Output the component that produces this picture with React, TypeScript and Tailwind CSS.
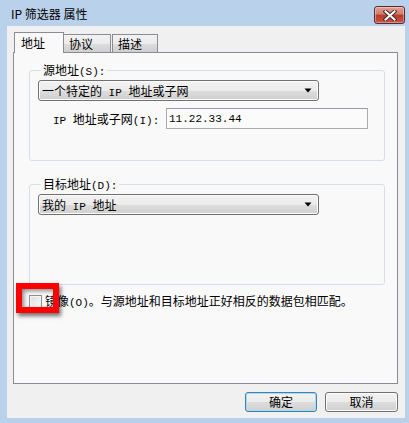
import React from "react";

const SANS = "font-['Noto_Sans_CJK_SC',sans-serif]";

// SimSun-like mix: CJK glyphs 12px wide, latin glyphs roughly half width
function T({ children }: { children: string }) {
  const runs = children.match(/[\x20-\x7e]+|[^\x20-\x7e]+/g) ?? [];
  return (
    <span className="inline-flex h-[14px] items-baseline whitespace-pre align-top">
      {runs.map((r, i) =>
        /^[\x20-\x7e]/.test(r) ? (
          <span key={i} className="font-['Liberation_Mono',monospace] text-[11px] leading-[14px]">
            {r}
          </span>
        ) : (
          <span key={i} className={`${SANS} text-[12px] leading-[14px]`}>
            {r}
          </span>
        )
      )}
    </span>
  );
}

function Arrow() {
  return (
    <svg width="8" height="5" viewBox="0 0 8 5">
      <path d="M0.5 0.5 H7.5 L4 4.5 Z" fill="#000" />
    </svg>
  );
}

function Combo({ label }: { label: string }) {
  return (
    <div className="flex h-[21px] w-[281px] items-center justify-between rounded-[3px] border border-[#707070] bg-[linear-gradient(#f2f2f2_0%,#ebebeb_50%,#dddddd_51%,#cfcfcf_100%)] pl-[3px] pr-[6px] shadow-[inset_0_0_0_1px_#fcfcfc]">
      <span className="text-[12px] leading-[14px] text-black">
        <T>{label}</T>
      </span>
      <Arrow />
    </div>
  );
}

function Group({ title, children, className }: { title: string; children: React.ReactNode; className?: string }) {
  return (
    <fieldset className={`w-[356px] rounded-[3px] border border-[#d5dfe5] pl-[8px] ${className ?? ""}`}>
      <legend className="ml-[3px] px-[2px] text-[12px] leading-[14px] text-black">
        <T>{title}</T>
      </legend>
      {children}
    </fieldset>
  );
}

export default function App() {
  return (
    <div className={`flex h-[423px] w-[409px] flex-col bg-[#b9d1ea] ${SANS}`}>
      {/* title bar */}
      <div className="flex h-[26px] items-start justify-between pl-[11px] pr-[7px]">
        <span className="mt-[6px] text-[12px] leading-[16px] text-black">IP 筛选器 属性</span>
        <button className="mr-[-3px] mt-[6px] flex h-[18px] w-[31px] items-center justify-center rounded-[3px] border border-[#5b2b2b] bg-[linear-gradient(#e0a197_0%,#cf7d6e_45%,#b83a28_50%,#c8564a_100%)] shadow-[inset_0_0_0_1px_rgba(255,255,255,0.35)]">
          <svg width="14" height="11" viewBox="0 0 14 11">
            <path d="M2.5 1.5 L11.5 9.5 M11.5 1.5 L2.5 9.5" stroke="#4a2a2a" strokeWidth="4" strokeLinecap="square" />
            <path d="M2.5 1.5 L11.5 9.5 M11.5 1.5 L2.5 9.5" stroke="#fff" strokeWidth="2" strokeLinecap="square" />
          </svg>
        </button>
      </div>

      {/* client */}
      <div className="ml-[7px] mr-[4px] mb-[5px] flex flex-1 flex-col bg-[#f0f0f0] pl-[6px] pr-[7px] pt-[6px]">
        {/* tabs */}
        <div className="flex h-[20px] items-end pl-[1px] text-[12px] text-black">
          <div className="relative z-10 mb-[-1px] flex h-[21px] w-[50px] items-start border border-b-0 border-[#898c95] bg-[#f9f9f9] pl-[6px] pt-[2px] leading-[16px]">
            地址
          </div>
          <div className="flex h-[18px] w-[47px] items-center border border-b-0 border-l-0 border-[#898c95] bg-[linear-gradient(#f2f2f2_0%,#ebebeb_50%,#dddddd_51%,#cfcfcf_100%)] pl-[5px] leading-[16px]">
            协议
          </div>
          <div className="ml-[1px] flex h-[18px] w-[46px] items-center border border-b-0 border-[#898c95] bg-[linear-gradient(#f2f2f2_0%,#ebebeb_50%,#dddddd_51%,#cfcfcf_100%)] pl-[5px] leading-[16px]">
            描述
          </div>
        </div>

        {/* panel */}
        <div className="relative h-[332px] border border-[#898c95] bg-[#f9f9f9] pl-[15px] pr-[12px] pt-[10px]">
          <Group title="源地址(S):" className="pb-[31px]">
            <div className="mt-[3px]">
              <Combo label="一个特定的 IP 地址或子网" />
            </div>
            <div className="mt-[7px] flex items-center">
              <span className="ml-[15px] w-[113px] text-[12px] leading-[14px] text-black">
                <T>IP 地址或子网(I):</T>
              </span>
              <div className="flex h-[21px] w-[202px] items-center border border-[#abadb3] border-t-[#9a9ca3] bg-[#fbfbfb] pl-[2px] text-[12px] leading-[14px] text-black">
                <T>11.22.33.44</T>
              </div>
            </div>
          </Group>

          <Group title="目标地址(D):" className="mt-[16px] pb-[69px]">
            <div className="mt-[3px]">
              <Combo label="我的 IP 地址" />
            </div>
          </Group>

          <div className="mt-[9px] flex items-center">
            <div className="h-[13px] w-[13px] border border-[#8e8f8f] bg-[linear-gradient(135deg,#dcdcdc,#fafafa)] shadow-[inset_0_0_0_1px_#f4f4f4]" />
            <span className="ml-[3px] text-[12px] leading-[14px] text-black">
              <T>镜像(O)。与源地址和目标地址正好相反的数据包相匹配。</T>
            </span>
          </div>

          <div className="absolute left-[2px] top-[230px] h-[30px] w-[43px] border-[6px] border-[#ff0000] shadow-[2px_3px_4px_rgba(0,0,0,0.55),inset_2px_2px_4px_rgba(0,0,0,0.45)]" />
        </div>

        {/* buttons */}
        <div className="mt-[8px] flex justify-end gap-[8px] text-[12px] text-black">
          <button className="flex h-[20px] w-[72px] items-center justify-center rounded-[3px] border border-[#3c7fb1] bg-[linear-gradient(#f2f2f2_0%,#ebebeb_50%,#dddddd_51%,#cfcfcf_100%)] leading-[16px] shadow-[inset_0_0_0_1px_#a6dcf7]">
            确定
          </button>
          <button className="flex h-[20px] w-[73px] items-center justify-center rounded-[3px] border border-[#707070] bg-[linear-gradient(#f2f2f2_0%,#ebebeb_50%,#dddddd_51%,#cfcfcf_100%)] leading-[16px] shadow-[inset_0_0_0_1px_#fcfcfc]">
            取消
          </button>
        </div>
      </div>
    </div>
  );
}
